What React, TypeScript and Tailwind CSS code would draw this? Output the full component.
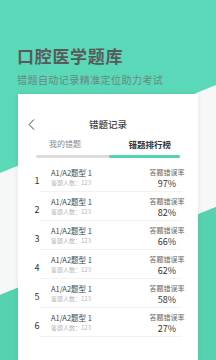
import React from 'react';

const rows = [
  { rank: 1, rate: '97%' },
  { rank: 2, rate: '82%' },
  { rank: 3, rate: '66%' },
  { rank: 4, rate: '62%' },
  { rank: 5, rate: '58%' },
  { rank: 6, rate: '27%' },
];

const font = { fontFamily: '"Noto Sans CJK SC", "Noto Sans", sans-serif' };

export default function App() {
  return (
    <div
      className="relative flex h-[360px] w-[216px] flex-col overflow-hidden bg-[#5bd8b8]"
      style={font}
    >
      {/* diagonal light band behind the card */}
      <svg className="absolute inset-0" width="216" height="360" viewBox="0 0 216 360">
        <polygon points="0,173 216,85 216,207 0,295" fill="#f6f7f7" />
        <polygon points="0,295 216,207 216,360 0,360" fill="#56d2b1" />
      </svg>

      {/* Header */}
      <div className="relative px-[17px] pt-[44px]">
        <h1 className="text-[17px] font-bold leading-[24px] tracking-[0.7px] text-[#595959]">口腔医学题库</h1>
        <p className="mt-[5px] text-[10px] leading-[14px] tracking-[0.45px] text-[#66897f]">
          错题自动记录精准定位助力考试
        </p>
      </div>

      {/* Card */}
      <div className="relative mx-[18px] mt-[7px] w-[180px] flex-1 bg-white shadow-[0_0_6px_rgba(0,0,0,0.08)]">
        <div className="relative mt-[20px] flex h-[20px] items-center justify-center">
          <svg className="absolute left-[10px] top-[5px]" width="7" height="11" viewBox="0 0 7 11">
            <polyline points="6,0.5 1,5.5 6,10.5" fill="none" stroke="#444" strokeWidth="1" />
          </svg>
          <span className="text-[9.5px] font-medium text-[#444]">错题记录</span>
        </div>

        {/* Tabs */}
        <div className="mx-[18px] mt-[3px] flex h-[14px] items-center">
          <span className="pl-[13px] text-[8px] text-[#8a8a8a]">我的错题</span>
          <span className="ml-auto pr-[9px] text-[8.5px] font-bold text-[#333]">错题排行榜</span>
        </div>
        <div className="mx-[18px] mt-[4px] flex h-[3px] rounded-full bg-[#dcdcdc]">
          <div className="ml-auto h-[3px] w-[71px] rounded-full bg-[#4fd6b1]" />
        </div>

        {/* Ranking list */}
        <div className="mt-[5px]">
          {rows.map((r) => (
            <div key={r.rank}>
              <div className="flex h-[28px]">
                <div className="ml-[14px] w-[10px] pt-[11px] text-center text-[9px] leading-[13px] text-[#333]">
                  {r.rank}
                </div>
                <div className="ml-[9px] pt-[4px]">
                  <div className="text-[7.5px] leading-[11px] text-[#444]">A1/A2题型 1</div>
                  <div className="text-[6px] leading-[10px] text-[#b5b5b5]">答题人数：123</div>
                </div>
                <div className="ml-auto mr-[12px] w-[38px] pt-[4px] text-center">
                  <div className="text-[7px] leading-[11px] text-[#666]">答题错误率</div>
                  <div className="text-[9px] leading-[11px] text-[#333]">{r.rate}</div>
                </div>
              </div>
              <div className="ml-[22px] mr-[16px] h-px bg-[#f2f2f2]" />
            </div>
          ))}
        </div>
      </div>
    </div>
  );
}
